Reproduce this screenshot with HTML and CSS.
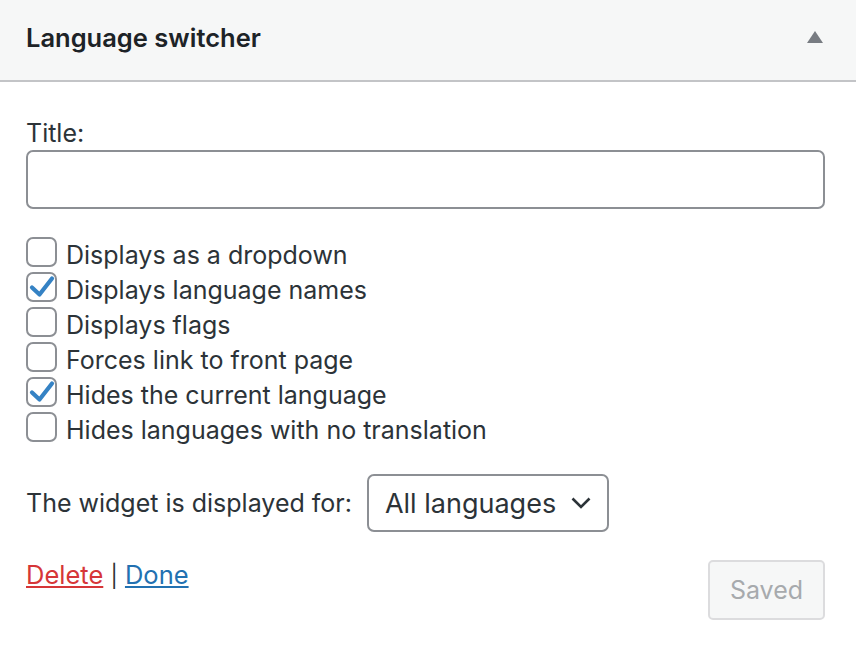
FILE: index.html
```html
<!DOCTYPE html>
<html lang="en">
<head>
<meta charset="utf-8">
<title>Language switcher</title>
<link rel="stylesheet" href="styles.css">
</head>
<body>
<div class="widget">
  <div class="widget-top">
    <h3 class="widget-title">Language switcher</h3>
    <svg class="toggle" width="18" height="14" viewBox="0 0 18 14"><path d="M9 1 L17 13 L1 13 Z" fill="#787c82"/></svg>
  </div>
  <div class="widget-inside">
    <div class="field">
      <label class="field-label" for="title">Title:</label>
      <input class="text-input" id="title" type="text">
    </div>
    <ul class="options">
      <li class="option"><span class="cb"></span><span class="opt-text">Displays as a dropdown</span></li>
      <li class="option"><span class="cb checked"><svg viewBox="0 0 32 32" width="32" height="32"><path d="M6 15.5 L13.5 22.5 L26 6.5" fill="none" stroke="#3582c4" stroke-width="4.2" stroke-linecap="round" stroke-linejoin="round"/></svg></span><span class="opt-text">Displays language names</span></li>
      <li class="option"><span class="cb"></span><span class="opt-text">Displays flags</span></li>
      <li class="option"><span class="cb"></span><span class="opt-text">Forces link to front page</span></li>
      <li class="option"><span class="cb checked"><svg viewBox="0 0 32 32" width="32" height="32"><path d="M6 15.5 L13.5 22.5 L26 6.5" fill="none" stroke="#3582c4" stroke-width="4.2" stroke-linecap="round" stroke-linejoin="round"/></svg></span><span class="opt-text">Hides the current language</span></li>
      <li class="option"><span class="cb"></span><span class="opt-text">Hides languages with no translation</span></li>
    </ul>
    <div class="lang-row">
      <span class="lang-label">The widget is displayed for:</span>
      <div class="select">
        <span>All languages</span>
        <svg class="chev" width="20" height="12" viewBox="0 0 20 12"><path d="M1.5 1.5 L10 10 L18.5 1.5" fill="none" stroke="#2c3338" stroke-width="2.6"/></svg>
      </div>
    </div>
    <div class="actions">
      <div class="links"><a class="delete" href="#">Delete</a> <span class="sep">|</span> <a class="done" href="#">Done</a></div>
      <button class="saved" type="button" disabled>Saved</button>
    </div>
  </div>
</div>
</body>
</html>
```
FILE: styles.css
```css
html, body {
  margin: 0;
  padding: 0;
  background: #ffffff;
}
body {
  font-family: Inter, "Liberation Sans", sans-serif;
  color: #2c3338;
}
.widget-top {
  height: 82px;
  box-sizing: border-box;
  background: #f6f7f7;
  border-bottom: 2px solid #c3c4c7;
  display: flex;
  align-items: center;
  justify-content: space-between;
  padding: 0 32px 6px 26px;
}
.widget-title {
  margin: 0;
  font-size: 25.5px;
  font-weight: 600;
  color: #1d2327;
}
.toggle {
  display: block;
}
.widget-inside {
  padding: 0 31px 0 26px;
}
.field {
  padding-top: 34px;
  display: flex;
  flex-direction: column;
}
.field-label {
  font-size: 25px;
  line-height: 34px;
}
.text-input {
  height: 59px;
  box-sizing: border-box;
  border: 2px solid #8c8f94;
  border-radius: 7px;
  background: #fff;
  margin: 0;
  font: inherit;
}
.options {
  list-style: none;
  margin: 25px 0 0;
  padding: 0;
  display: flex;
  flex-direction: column;
}
.option {
  display: flex;
  align-items: center;
  gap: 9px;
  height: 35px;
  font-size: 25px;
}
.opt-text {
  padding-top: 6px;
}
.cb {
  width: 31px;
  height: 30px;
  box-sizing: border-box;
  border: 2px solid #8c8f94;
  border-radius: 7px;
  background: #fff;
  flex: none;
  position: relative;
}
.cb svg {
  position: absolute;
  left: -2px;
  top: -2px;
}
.lang-row {
  display: flex;
  align-items: center;
  gap: 15px;
  margin-top: 30px;
}
.lang-label {
  font-size: 25px;
}
.select {
  width: 242px;
  height: 58px;
  box-sizing: border-box;
  border: 2px solid #8c8f94;
  border-radius: 7px;
  display: flex;
  align-items: center;
  justify-content: space-between;
  padding: 0 16px 0 16px;
  font-size: 27px;
  color: #2c3338;
}
.chev {
  display: block;
}
.actions {
  display: flex;
  justify-content: space-between;
  align-items: flex-start;
  margin-top: 28px;
}
.links {
  font-size: 25.5px;
  line-height: 30px;
  color: #2c3338;
}
.sep {
  font-size: 22px;
}
.delete {
  color: #d63638;
}
.done {
  color: #2271b1;
}
.saved {
  width: 117px;
  height: 60px;
  box-sizing: border-box;
  background: #f6f7f7;
  border: 2px solid #dcdcde;
  border-radius: 5px;
  color: #a7aaad;
  font: inherit;
  font-size: 25px;
  margin-top: 0;
}
```
